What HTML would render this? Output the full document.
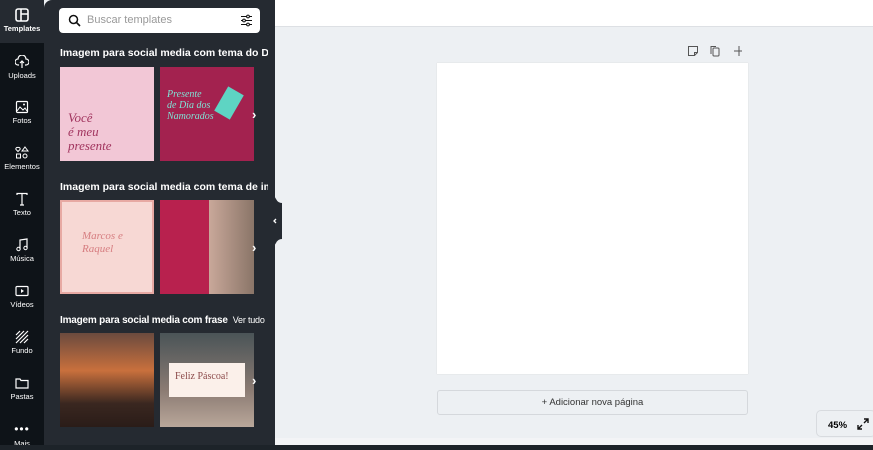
<!DOCTYPE html>
<html><head><meta charset="utf-8"><style>
*{margin:0;padding:0;box-sizing:border-box}
body{width:873px;height:450px;overflow:hidden;background:#edf0f3;font-family:"Liberation Sans",sans-serif;position:relative}
.side{position:absolute;left:0;top:0;width:44px;height:450px;background:#0e1318}
.side .tpl{position:absolute;left:0;top:0;width:44px;height:43px;background:#252a31}
.it{position:absolute;left:0;width:44px;text-align:center;color:#fff;font-size:7.5px;font-weight:bold}
.it svg{display:block;margin:0 auto 2px}
.panel{position:absolute;left:44px;top:0;width:231px;height:450px;background:#252a31;border-top-left-radius:8px}
.search{position:absolute;left:59px;top:8px;width:201px;height:25px;background:#fff;border-radius:4px;color:#999;font-size:11px;line-height:25px;padding-left:28px}
h3{position:absolute;left:60px;color:#fff;font-size:10.5px;font-weight:bold;white-space:nowrap;overflow:hidden;width:208px}
h3 span{font-weight:normal;font-size:9px;margin-left:5px}
.th{position:absolute;width:94px;height:94px;overflow:hidden}
.arr{position:absolute;left:252px;color:#fff;font-size:13px;font-weight:bold}
.top{position:absolute;left:275px;top:0;width:598px;height:27px;background:#fff;border-bottom:1px solid #dde0e4}
.page{position:absolute;left:437px;top:63px;width:311px;height:311px;background:#fff;box-shadow:0 0 1px #ccc}
.add{position:absolute;left:437px;top:390px;width:311px;height:25px;border:1px solid #d5d8dc;border-radius:3px;font-size:9.5px;color:#333;text-align:center;line-height:23px;background:#edf0f3}
.zoom{position:absolute;left:816px;top:410px;width:60px;height:27px;border:1px solid #d8dbdf;border-radius:5px;background:#edf0f3;font-size:9.5px;font-weight:bold;padding:9px 0 0 11px}
.bottom{position:absolute;left:0;top:445px;width:873px;height:5px;background:#1d2329}
</style></head><body>
<div class="side">
<div class="tpl"></div>
<div class="it" style="top:8px"><svg width="14" height="14" viewBox="0 0 14 14"><rect x="1" y="1" width="12" height="12" rx="2" fill="none" stroke="#fff" stroke-width="1.6"/><path d="M6 1v12M6 6h7" stroke="#fff" stroke-width="1.6"/></svg>Templates</div>
<div class="it" style="top:55px;font-weight:normal"><svg width="14" height="14" viewBox="0 0 14 14"><path d="M4 10H3a3 3 0 0 1 0-6 4 4 0 0 1 8 0 3 3 0 0 1 0 6h-1M7 13V6M5 8l2-2 2 2" fill="none" stroke="#fff" stroke-width="1.2"/></svg>Uploads</div>
<div class="it" style="top:100px;font-weight:normal"><svg width="14" height="14" viewBox="0 0 14 14"><rect x="1.5" y="1.5" width="11" height="11" rx="1" fill="none" stroke="#fff" stroke-width="1.2"/><path d="M2 11l3-4 3 3 2-2 2 3" fill="none" stroke="#fff"/><circle cx="9" cy="4.5" r="1" fill="#fff"/></svg>Fotos</div>
<div class="it" style="top:146px;font-weight:normal"><svg width="14" height="14" viewBox="0 0 14 14"><path d="M3 1.5a1.5 1.5 0 0 1 2 2L3 5.5 1 3.5a1.5 1.5 0 0 1 2-2zM10 1l3 4H7zM1.5 8h4v4h-4zM10 8a2 2 0 1 1 0 4 2 2 0 0 1 0-4z" fill="none" stroke="#fff"/></svg>Elementos</div>
<div class="it" style="top:192px;font-weight:normal"><svg width="14" height="14" viewBox="0 0 14 14"><path d="M2 3V1.5h10V3M7 1.5V13M5 13h4" fill="none" stroke="#fff" stroke-width="1.2"/></svg>Texto</div>
<div class="it" style="top:238px;font-weight:normal"><svg width="14" height="14" viewBox="0 0 14 14"><path d="M5 11V2l7-1v9" fill="none" stroke="#fff" stroke-width="1.2"/><circle cx="3.5" cy="11" r="1.7" fill="none" stroke="#fff"/><circle cx="10.5" cy="10" r="1.7" fill="none" stroke="#fff"/></svg>Música</div>
<div class="it" style="top:284px;font-weight:normal"><svg width="14" height="14" viewBox="0 0 14 14"><rect x="1" y="2.5" width="12" height="9" rx="1" fill="none" stroke="#fff" stroke-width="1.2"/><path d="M6 5v4l3-2z" fill="#fff"/></svg>Vídeos</div>
<div class="it" style="top:330px;font-weight:normal"><svg width="14" height="14" viewBox="0 0 14 14"><path d="M1 5L5 1M1 9L9 1M1 13L13 1M5 13L13 5M9 13L13 9" stroke="#fff" stroke-width="1.2"/></svg>Fundo</div>
<div class="it" style="top:376px;font-weight:normal"><svg width="14" height="14" viewBox="0 0 14 14"><path d="M1 3h4l1 1.5h7V12H1z" fill="none" stroke="#fff" stroke-width="1.2"/></svg>Pastas</div>
<div class="it" style="top:425px;font-weight:normal"><div style="font-size:12px;line-height:8px;letter-spacing:1px">•••</div><div style="margin-top:6px">Mais</div></div>
</div>
<div class="panel"></div>
<div class="search"><svg style="position:absolute;left:9px;top:6px" width="13" height="13" viewBox="0 0 13 13"><circle cx="5.5" cy="5.5" r="4" fill="none" stroke="#111" stroke-width="1.5"/><path d="M8.5 8.5l3.5 3.5" stroke="#111" stroke-width="1.6"/></svg>Buscar templates<svg style="position:absolute;right:7px;top:6px" width="13" height="13" viewBox="0 0 13 13"><path d="M1 2.5h11M1 6.5h11M1 10.5h11" stroke="#111"/><circle cx="8" cy="2.5" r="1.4" fill="#fff" stroke="#111"/><circle cx="4" cy="6.5" r="1.4" fill="#fff" stroke="#111"/><circle cx="8" cy="10.5" r="1.4" fill="#fff" stroke="#111"/></svg></div>
<h3 style="top:47px">Imagem para social media com tema do Dia dos</h3>
<div class="th" style="left:60px;top:67px;background:#f2c7d6"><div style="position:absolute;left:8px;top:44px;color:#a1345e;font-family:'Liberation Serif',serif;font-style:italic;font-size:13px;line-height:14px">Você<br>é meu<br>presente</div></div>
<div class="th" style="left:160px;top:67px;background:#a3224f"><div style="position:absolute;left:7px;top:22px;color:#7fe3d6;font-style:italic;font-size:10px;line-height:11px;font-family:'Liberation Serif',serif">Presente<br>de Dia dos<br>Namorados</div><div style="position:absolute;left:60px;top:22px;width:18px;height:28px;background:#5ed4c3;transform:rotate(30deg)"></div></div>
<div class="arr" style="top:107px">›</div>
<h3 style="top:181px">Imagem para social media com tema de imobiliárias</h3>
<div class="th" style="left:60px;top:200px;background:#f7d8d4;border:2px solid #e7a9a3"><div style="position:absolute;left:20px;top:28px;color:#d67d80;font-family:'Liberation Serif',serif;font-style:italic;font-size:11px;line-height:13px">Marcos e<br>Raquel</div></div>
<div class="th" style="left:160px;top:200px;background:linear-gradient(90deg,#b8214e 0,#b8214e 52%,#c9a89a 52%,#8a7568 100%)"></div>
<div class="arr" style="top:240px">›</div>
<h3 style="top:315px;font-size:10px;letter-spacing:-0.2px">Imagem para social media com frase<span>Ver tudo</span></h3>
<div class="th" style="left:60px;top:333px;background:linear-gradient(180deg,#6b4a3e,#c9703d 40%,#3a2720 75%,#2a1c18)"></div>
<div class="th" style="left:160px;top:333px;background:linear-gradient(180deg,#4a5457,#8a7a72 60%,#b9a79a)"><div style="position:absolute;left:9px;top:30px;width:76px;height:34px;background:#fbf0ea;color:#8c4a4a;font-family:'Liberation Serif',serif;font-size:10px;padding:8px 6px">Feliz Páscoa!</div></div>
<div class="arr" style="top:373px">›</div>
<div style="position:absolute;left:93px;top:446px;width:32px;height:4px;background:#555"></div>
<svg style="position:absolute;left:270px;top:195px" width="17" height="52" viewBox="0 0 17 52"><path d="M0 0q4 0 6 4 2 4 6 4v36q-4 0-6 4t-6 4z" fill="#252a31"/><path d="M6 24l-2 2 2 2" fill="none" stroke="#fff" stroke-width="1.3"/></svg>
<div class="top"></div>
<svg style="position:absolute;left:687px;top:45px" width="55" height="12" viewBox="0 0 55 12"><path d="M1.5 1.5h9v6l-3 3h-6z M7.5 10.5v-3h3" fill="none" stroke="#555"/><rect x="26" y="3" width="6" height="8" rx="1" fill="none" stroke="#555"/><path d="M24 9V1.5h5" fill="none" stroke="#555"/><path d="M52 1v10M47 6h10" stroke="#555"/></svg>
<div class="page"></div>
<div class="add">+ Adicionar nova página</div>
<div class="zoom">45%<svg style="position:absolute;left:40px;top:7px" width="12" height="12" viewBox="0 0 12 12"><path d="M7 1h4v4M11 1L7 5M5 11H1V7M1 11l4-4" fill="none" stroke="#111" stroke-width="1.4"/></svg></div>
<div style="position:absolute;left:275px;top:438px;width:598px;height:7px;background:#f3f4f6"></div>
<div class="bottom"></div>
</body></html>
